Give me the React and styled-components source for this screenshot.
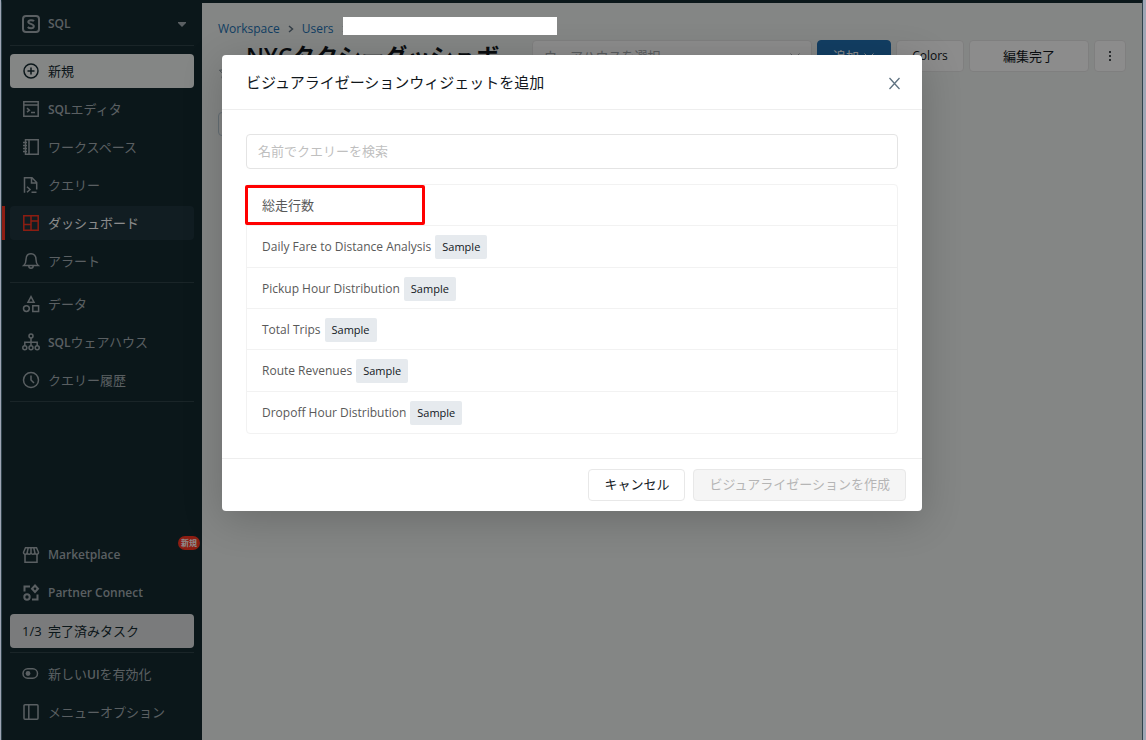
import React from 'react';
import styled, { createGlobalStyle, css } from 'styled-components';

const colors = {
  nav: '#142a31',
  navText: '#a4aeb2',
  navLine: '#30444a',
  page: '#f1f4f2',
  blue: '#2272b4',
  red: '#ff3621',
  ink: '#11171c',
  line: '#e8e8e8',
};

const fonts = `'Open Sans', 'Noto Sans CJK JP', sans-serif`;

const GlobalStyle = createGlobalStyle`
  *, *::before, *::after { box-sizing: border-box; }
  body { margin: 0; background: #9ea6b5; font-family: ${fonts}; font-size: 13px; line-height: 20px; }
  button, input { font: inherit; }
  a { text-decoration: none; }
`;

const Frame = styled.div`
  position: relative;
  display: flex;
  min-height: 100vh;
  margin: 0 3px 0 1px;
  border-top: 3px solid ${colors.nav};
  border-left: 1px solid #30424b;
  border-right: 1px solid #30424b;
  background: ${colors.page};
`;

/* ---------- sidebar ---------- */

const Sidebar = styled.nav`
  display: flex;
  flex-direction: column;
  flex: 0 0 200px;
  padding: 4px 8px 11px;
  background: ${colors.nav};
`;

const NavList = styled.div`
  display: flex;
  flex-direction: column;
  gap: 4px;
`;

const Divider = styled.hr`
  width: 100%;
  height: 1px;
  margin: 4px 0 ${(p) => (p.$wide ? '8px' : '4px')};
  border: 0;
  background: ${colors.navLine};
`;

const Spacer = styled.div`
  flex: 1;
`;

const itemStyles = css`
  position: relative;
  display: flex;
  align-items: center;
  gap: 8px;
  width: 100%;
  height: 34px;
  padding: 0 8px 0 12px;
  border: 0;
  border-radius: 4px;
  background: transparent;
  color: ${colors.navText};
  font-weight: 600;
  font-size: 12px;
  text-align: left;
  white-space: nowrap;
  svg { flex: none; }
`;

const NavLink = styled.a`
  ${itemStyles}
  ${(p) => p.$active && css`
    background: #20363e;
    color: #fff;
    svg { color: ${colors.red}; }
    &::before {
      content: '';
      position: absolute;
      left: -8px;
      width: 3px;
      height: 34px;
      background: ${colors.red};
    }
  `}
`;

const NavButton = styled.button`
  ${itemStyles}
  ${(p) => p.$filled && css`
    background: ${p.$filled};
    color: ${colors.nav};
  `}
`;

const Label = styled.span`
  flex: 1;
  font-size: ${(p) => (p.$latin ? '12px' : '13px')};
  font-weight: ${(p) => (p.$latin ? 600 : 400)};
`;

const Em = styled.b`
  font-size: 12px;
  font-weight: 600;
`;

const Count = styled.span`
  width: 18px;
  font-size: 13px;
  font-weight: 400;
`;

const NewBadge = styled.span`
  position: absolute;
  top: -2px;
  right: -6px;
  padding: 0 3px;
  border-radius: 7px;
  background: ${colors.red};
  color: #fff;
  font-size: 8px;
  line-height: 14px;
`;

/* ---------- page behind the dialog ---------- */

const Main = styled.main`
  flex: 1;
  min-width: 0;
  padding: 16px 16px 0;
`;

const Crumbs = styled.div`
  display: flex;
  align-items: center;
  gap: 8px;
  height: 20px;
  font-size: 12px;
  a { color: ${colors.blue}; }
  svg { color: #5f7281; }
`;

const Hidden = styled.span`
  position: relative;
  width: 6px;
  height: 18px;
  display: flex;
  align-items: center;
  &::after {
    content: '';
    position: absolute;
    z-index: 3;
    top: -3px;
    left: 1px;
    width: 214px;
    height: 18px;
    background: #fff;
  }
`;

const Toolbar = styled.div`
  display: flex;
  align-items: flex-start;
  gap: 5px;
  padding-top: 1px;
`;

const TitleBox = styled.div`
  flex: 1;
  display: flex;
  align-items: center;
  gap: 12px;
  min-width: 0;
  padding-right: 18px;
  color: #8a979f;
  svg { flex: none; }
`;

const Title = styled.h1`
  margin: 0;
  color: ${colors.ink};
  font-size: 23px;
  line-height: 32px;
  font-weight: 600;
`;

const toolStyles = css`
  display: flex;
  align-items: center;
  justify-content: center;
  height: 32px;
  border: 1px solid ${colors.line};
  border-radius: 4px;
  background: #fff;
  color: ${colors.ink};
  white-space: nowrap;
`;

const ToolButton = styled.button`
  ${toolStyles}
  flex: 0 0 ${(p) => p.$w};
  gap: 4px;
  font-size: ${(p) => (p.$latin ? '12px' : '13px')};
  ${(p) => p.$primary && css`
    border-color: ${colors.blue};
    background: ${colors.blue};
    color: #fff;
  `}
`;

const Warehouse = styled.button`
  ${toolStyles}
  flex: 0 0 280px;
  justify-content: space-between;
  padding: 0 10px 0 11px;
  color: #a3a8ab;
`;

const TagButton = styled.button`
  ${toolStyles}
  width: 60px;
  height: 24px;
  margin-top: 8px;
  border-color: #b9cad6;
  background: transparent;
`;

/* ---------- dialog ---------- */

const Backdrop = styled.div`
  position: absolute;
  z-index: 2;
  top: -3px;
  right: 0;
  bottom: 0;
  left: 0;
  display: flex;
  align-items: flex-start;
  justify-content: center;
  padding-top: 55px;
  background: rgba(0, 0, 0, 0.45);
`;

const Dialog = styled.section`
  width: 700px;
  max-width: 100%;
  border-radius: 4px;
  background: #fff;
  box-shadow: 0 8px 40px rgba(0, 0, 0, 0.2);
`;

const DialogHeader = styled.header`
  display: flex;
  align-items: center;
  justify-content: space-between;
  height: 55px;
  padding: 0 20px 0 24px;
  border-bottom: 1px solid #eee;
`;

const DialogTitle = styled.h2`
  margin: 0;
  color: ${colors.ink};
  font-size: 15px;
  line-height: 22px;
  font-weight: 400;
`;

const Close = styled.button`
  display: flex;
  padding: 2px 0 0;
  border: 0;
  background: none;
  color: #5f7281;
`;

const DialogBody = styled.div`
  padding: 24px;
`;

const Search = styled.input`
  display: block;
  width: 100%;
  height: 35px;
  margin-bottom: 15px;
  padding: 0 11px 2px;
  border: 1px solid #e4e4e4;
  border-radius: 4px;
  color: ${colors.ink};
  &::placeholder { color: #bfbfbf; opacity: 1; }
`;

const QueryList = styled.ul`
  display: grid;
  grid-auto-rows: 1fr;
  min-height: 250px;
  margin: 0;
  padding: 0;
  border: 1px solid #f2f2f2;
  border-radius: 4px;
  list-style: none;
`;

const QueryItem = styled.li`
  position: relative;
  display: flex;
  border-bottom: ${(p) => (p.$last ? '0' : '1px solid #f2f2f2')};
  ${(p) => p.$marked && css`
    &::after {
      content: '';
      position: absolute;
      z-index: 1;
      top: 0;
      left: -2px;
      width: 180px;
      height: 40px;
      border: 3px solid #f00;
      border-radius: 2px;
      pointer-events: none;
    }
  `}
`;

const QueryLink = styled.a`
  flex: 1;
  display: flex;
  align-items: center;
  gap: 4px;
  padding: ${(p) => (p.$latin ? '2px 15px 0' : '0 15px')};
  color: #595959;
  font-size: ${(p) => (p.$latin ? '12px' : '13px')};
`;

const Tag = styled.span`
  padding: 0 7px;
  border-radius: 2px;
  background: #e6eaee;
  color: ${colors.ink};
  font-size: 11px;
  font-weight: 500;
  line-height: 24px;
`;

const DialogFooter = styled.footer`
  display: flex;
  justify-content: flex-end;
  gap: 8px;
  padding: 10px 16px;
  border-top: 1px solid #eee;
`;

const DialogButton = styled.button`
  height: 32px;
  padding: 0 15px 2px;
  border: 1px solid ${colors.line};
  border-radius: 4px;
  background: #fff;
  color: ${colors.ink};
  &:disabled { background: #f5f5f5; color: #b5b5b5; }
`;

/* ---------- icons ---------- */

const Icon = ({ children, size = 18, box = 18 }) => (
  <svg
    width={size}
    height={size}
    viewBox={`0 0 ${box} ${box}`}
    fill="none"
    stroke="currentColor"
    strokeWidth="1.5"
    aria-hidden="true"
  >
    {children}
  </svg>
);

const icons = {
  sql: (
    <>
      <rect x="1" y="1" width="16" height="16" rx="3" strokeWidth="2" />
      <path d="M12 6.200C10.900 4.900 6.500 4.500 6.300 6.900c-.2 2.500 5.600 1.500 5.500 4.400-.1 2.700-4.700 2.300-6 .7" strokeWidth="2" />
    </>
  ),
  plus: (
    <>
      <circle cx="9" cy="9" r="7" />
      <path d="M9 5.500v7M5.500 9h7" />
    </>
  ),
  editor: (
    <>
      <path d="M1.800 1.800h14.400v14.400H1.800zM1.800 5h14.400" />
      <path d="M5 8.200l2.400 2-2.400 2M9 12.500h4" />
    </>
  ),
  notebook: (
    <>
      <path d="M3.500 1.800h12.700v14.400H3.500zM7 1.800v14.400" />
      <path d="M1 4.500h4M1 7.500h4M1 10.500h4M1 13.500h4" />
    </>
  ),
  query: (
    <>
      <path d="M2.500 16.800V1.800h7.500l4.700 4.700v7M9.500 2v5h5" />
      <path d="M5 10.800L8 13.500l-3 2.700M9.500 16.200h5" />
    </>
  ),
  dashboard: <path d="M1.800 1.800h14.400v14.400H1.800zM9 1.800v14.400M1.800 10.500H9M9 7h7.200" />,
  bell: (
    <>
      <path d="M1.800 13.500h14.400c-1.800-1.500-2.200-2.800-2.200-6C14 4 12 1.800 9 1.800S4 4 4 7.500c0 3.200-.4 4.500-2.200 6z" />
      <path d="M6.800 13.800c0 3.300 4.400 3.300 4.400 0" />
    </>
  ),
  data: (
    <>
      <path d="M9 1.600L12 7.200H6zM10.800 10.800h5.800v5.600h-5.800z" />
      <circle cx="4.400" cy="13.600" r="2.900" />
    </>
  ),
  warehouse: (
    <>
      <circle cx="9" cy="3" r="2" />
      <circle cx="2.800" cy="14.700" r="2" />
      <circle cx="9" cy="14.700" r="2" />
      <circle cx="15.200" cy="14.700" r="2" />
      <path d="M9 5v7.700M2.800 12.700V9.200h12.400v3.500" />
    </>
  ),
  clock: (
    <>
      <circle cx="9" cy="9" r="7.500" />
      <path d="M9 4.500V9l3 3" />
    </>
  ),
  store: (
    <>
      <path d="M3 8v8.200h12V8" />
      <path d="M3.500 1.800h11l2 4.500c0 2.600-3.700 2.600-3.700 0 0 2.600-3.800 2.600-3.800 0 0 2.600-3.800 2.600-3.800 0 0 2.600-3.700 2.600-3.700 0zM6.200 2l-1 4.300M11.800 2l1 4.300M9 2v4.300" />
    </>
  ),
  partner: (
    <>
      <path d="M2.500 7.500v-5H8M15.500 10.500v5H10" strokeWidth="2" />
      <path d="M13 1.500L16 4.700 13 8 10 4.700z" strokeWidth="2" />
      <circle cx="5" cy="13" r="2.700" strokeWidth="2" />
    </>
  ),
  toggle: (
    <>
      <rect x="1" y="3.800" width="14.500" height="9.400" rx="4.700" />
      <circle cx="6" cy="8.500" r="2.400" fill="currentColor" stroke="none" />
    </>
  ),
  panel: <path d="M3 1.800h12a1 1 0 0 1 1 1v12.400a1 1 0 0 1-1 1H3a1 1 0 0 1-1-1V2.800a1 1 0 0 1 1-1zM6.800 1.800v14.400" />,
};

const Glyph = ({ name }) => <Icon>{icons[name]}</Icon>;

const Chevron = () => (
  <svg width="6" height="10" viewBox="0 0 6 10" fill="none" stroke="currentColor" strokeWidth="1.500" aria-hidden="true">
    <path d="M1 2l3.500 3L1 8" />
  </svg>
);

const Down = () => (
  <svg width="12" height="12" viewBox="0 0 12 12" fill="none" stroke="currentColor" aria-hidden="true">
    <path d="M1.500 3.500L6 8l4.500-4.500" />
  </svg>
);

/* ---------- data ---------- */

const primaryNav = [
  { icon: 'editor', latin: 'SQL', text: 'エディタ' },
  { icon: 'notebook', text: 'ワークスペース' },
  { icon: 'query', text: 'クエリー' },
  { icon: 'dashboard', text: 'ダッシュボード', active: true },
  { icon: 'bell', text: 'アラート' },
];

const dataNav = [
  { icon: 'data', text: 'データ' },
  { icon: 'warehouse', latin: 'SQL', text: 'ウェアハウス' },
  { icon: 'clock', text: 'クエリー履歴' },
];

const queries = [
  { name: '総走行数', marked: true },
  { name: 'Daily Fare to Distance Analysis', sample: true },
  { name: 'Pickup Hour Distribution', sample: true },
  { name: 'Total Trips', sample: true },
  { name: 'Route Revenues', sample: true },
  { name: 'Dropoff Hour Distribution', sample: true },
];

const NavItems = ({ items }) =>
  items.map(({ icon, latin, text, active }) => (
    <NavLink key={text} href="#" $active={active}>
      <Glyph name={icon} />
      <Label>
        {latin && <Em>{latin}</Em>}
        {text}
      </Label>
    </NavLink>
  ));

const App = () => (
  <>
    <GlobalStyle />
    <Frame>
      <Sidebar>
        <NavButton type="button">
          <Glyph name="sql" />
          <Label $latin>SQL</Label>
          <svg width="8" height="5" viewBox="0 0 8 5" fill="currentColor" aria-hidden="true">
            <path d="M0 0h8v1L4 5 0 1z" />
          </svg>
        </NavButton>
        <Divider $wide />
        <NavList>
          <NavButton type="button" $filled={colors.page}>
            <Glyph name="plus" />
            <Label>新規</Label>
          </NavButton>
          <NavItems items={primaryNav} />
        </NavList>
        <Divider />
        <NavList>
          <NavItems items={dataNav} />
        </NavList>
        <Divider />
        <Spacer />
        <NavList>
          <NavLink href="#">
            <Glyph name="store" />
            <Label $latin>Marketplace</Label>
            <NewBadge>新規</NewBadge>
          </NavLink>
          <NavLink href="#">
            <Glyph name="partner" />
            <Label $latin>Partner Connect</Label>
          </NavLink>
          <NavButton type="button" $filled="#dfe1e2">
            <Count>1/3</Count>
            <Label>完了済みタスク</Label>
          </NavButton>
        </NavList>
        <Divider />
        <NavList>
          <NavButton type="button">
            <Glyph name="toggle" />
            <Label>
              新しい<Em>UI</Em>を有効化
            </Label>
          </NavButton>
          <NavButton type="button">
            <Glyph name="panel" />
            <Label>メニューオプション</Label>
          </NavButton>
        </NavList>
      </Sidebar>

      <Main>
        <Crumbs>
          <a href="#">Workspace</a>
          <Chevron />
          <a href="#">Users</a>
          <Hidden>
            <Chevron />
          </Hidden>
        </Crumbs>
        <Toolbar>
          <TitleBox>
            <svg width="16" height="16" viewBox="0 0 16 16" fill="none" stroke="currentColor" aria-hidden="true">
              <path d="M8 1.500l2 4.200 4.600.6-3.400 3.200.9 4.600L8 11.900l-4.100 2.200.9-4.600L1.400 6.300 6 5.700z" />
            </svg>
            <Title>NYCタクシーダッシュボード</Title>
          </TitleBox>
          <Warehouse type="button">
            ウェアハウスを選択
            <Down />
          </Warehouse>
          <ToolButton type="button" $w="74px" $primary>
            追加
            <Down />
          </ToolButton>
          <ToolButton type="button" $w="68px" $latin>Colors</ToolButton>
          <ToolButton type="button" $w="120px">編集完了</ToolButton>
          <ToolButton type="button" $w="32px" aria-label="メニュー">
            <svg width="4" height="14" viewBox="0 0 4 14" fill="currentColor" aria-hidden="true">
              <circle cx="2" cy="3" r="1" />
              <circle cx="2" cy="7" r="1" />
              <circle cx="2" cy="11" r="1" />
            </svg>
          </ToolButton>
        </Toolbar>
        <TagButton type="button" aria-label="タグ" />
      </Main>

      <Backdrop>
        <Dialog role="dialog" aria-modal="true" aria-labelledby="dialog-title">
          <DialogHeader>
            <DialogTitle id="dialog-title">ビジュアライゼーションウィジェットを追加</DialogTitle>
            <Close type="button" aria-label="閉じる">
              <svg width="15" height="15" viewBox="0 0 15 15" fill="none" stroke="currentColor" strokeWidth="1.300" aria-hidden="true">
                <path d="M2.500 2l10 11M12.500 2l-10 11" />
              </svg>
            </Close>
          </DialogHeader>
          <DialogBody>
            <Search type="text" placeholder="名前でクエリーを検索" aria-label="名前でクエリーを検索" />
            <QueryList>
              {queries.map(({ name, sample, marked }, i) => (
                <QueryItem key={name} $last={i === queries.length - 1} $marked={marked}>
                  <QueryLink href="#" $latin={sample}>
                    {name}
                    {sample && <Tag>Sample</Tag>}
                  </QueryLink>
                </QueryItem>
              ))}
            </QueryList>
          </DialogBody>
          <DialogFooter>
            <DialogButton type="button">キャンセル</DialogButton>
            <DialogButton type="button" disabled>ビジュアライゼーションを作成</DialogButton>
          </DialogFooter>
        </Dialog>
      </Backdrop>
    </Frame>
  </>
);

export default App;
